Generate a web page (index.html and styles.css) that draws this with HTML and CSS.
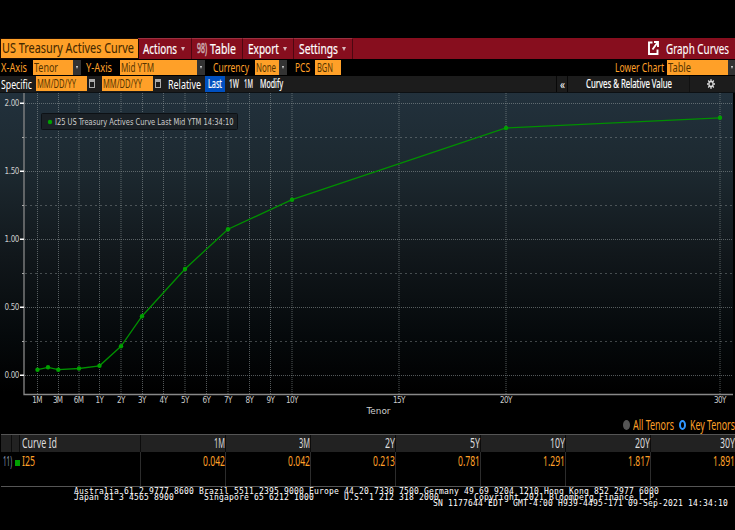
FILE: index.html
```html
<!DOCTYPE html>
<html lang="en">

<head>
	<meta charset="UTF-8" />
	<title>US Treasury Actives Curve</title>
	<link rel="stylesheet" href="styles.css">
	<script src="app.js" defer></script>
</head>

<body>
	<header class="title-bar">
		<h1 class="page-title"><span data-fit="132">US Treasury Actives Curve</span></h1>
		<nav class="menu">
			<div class="menu-item actions"><span data-fit="34">Actions</span><i class="caret"></i></div>
			<div class="menu-item table-item"><span class="key" data-fit="10">98)</span><span data-fit="26">Table</span></div>
			<div class="menu-item export"><span data-fit="31">Export</span><i class="caret"></i></div>
			<div class="menu-item settings"><span data-fit="39">Settings</span><i class="caret"></i></div>
		</nav>
		<div class="screen-name">
			<svg width="11" height="14" viewBox="0 0 11 14">
				<path d="M4.500 1.500H1v11.500h8.500V8.500M6 1h4v5M9.500 1.500L4.500 8.500" fill="none" stroke="#fff" stroke-width="1.900" />
			</svg>
			<span data-fit="63">Graph Curves</span>
		</div>
	</header>

	<div class="options">
		<label class="x-label"><span data-fit="26">X-Axis</span></label>
		<div class="field tenor"><span data-fit="24">Tenor</span></div><i class="drop"></i>
		<label class="y-label"><span data-fit="26">Y-Axis</span></label>
		<div class="field ytm"><span data-fit="33">Mid YTM</span></div><i class="drop"></i>
		<label class="cur-label"><span data-fit="36">Currency</span></label>
		<div class="field cur"><span data-fit="20">None</span></div><i class="drop"></i>
		<label class="pcs-label"><span data-fit="15">PCS</span></label>
		<div class="field bgn"><span data-fit="16">BGN</span></div>
		<label class="lower-label"><span data-fit="49">Lower Chart</span></label>
		<div class="field lower"><span data-fit="23">Table</span></div><i class="drop"></i>
	</div>

	<div class="toolbar">
		<span class="specific" data-fit="31">Specific</span>
		<div class="field date"><span data-fit="39">MM/DD/YY</span></div><i class="calendar"></i>
		<div class="field date"><span data-fit="39">MM/DD/YY</span></div><i class="calendar"></i>
		<span class="relative" data-fit="33">Relative</span>
		<div class="range active"><span data-fit="14">Last</span></div>
		<div class="range week"><span data-fit="10">1W</span></div>
		<div class="range month"><span data-fit="9">1M</span></div>
		<div class="range modify"><span data-fit="23">Modify</span></div>
		<div class="collapse"><span data-fit="5">«</span></div>
		<div class="panel-name"><span data-fit="86">Curves &amp; Relative Value</span></div>
		<div class="gear">
			<svg width="8" height="10" viewBox="-5 -5 10 10" preserveAspectRatio="none">
				<circle r="2.600" fill="none" stroke="#ddd" stroke-width="1.600" />
				<path d="M0-5v2M0 3v2M-5 0h2M3 0h2M-3.600-3.600l1.400 1.400M2.200 2.200l1.400 1.400M-3.600 3.600l1.400-1.400M2.200-2.200l1.400-1.400" stroke="#ddd" stroke-width="1.400" />
			</svg>
		</div>
	</div>

	<svg class="chart" width="735" height="325" viewBox="0 93 735 325">
		<defs>
			<linearGradient id="sky" x1="0" y1="0" x2="0" y2="1">
				<stop offset="0" stop-color="#22313c" />
				<stop offset=".25" stop-color="#1c282f" />
				<stop offset=".5" stop-color="#11171b" />
				<stop offset=".75" stop-color="#05090b" />
				<stop offset=".92" stop-color="#000" />
			</linearGradient>
		</defs>
		<rect x="0" y="93" width="733" height="325" fill="url(#sky)" />
		<path class="grid" d="M25 103.500H733M25 171.500H733M25 239.500H733M25 307.500H733M25 375.500H733" />
		<path class="grid minor" d="M25 137.500H733M25 205.500H733M25 273.500H733M25 341.500H733" />
		<path class="grid" d="M37.500 93V394M58.500 93V394M79 93V394M99.500 93V394M121 93V394M142.500 93V394M163.500 93V394M185 93V394M206.500 93V394M228 93V394M249.500 93V394M270.500 93V394M292 93V394M399 93V394M506 93V394M720 93V394" />
		<path class="axis" d="M24 93V394.500H733" />
		<path class="tick" d="M20 103.300h4M20 171.300h4M20 239.300h4M20 307.300h4M20 375.300h4" />
		<path class="tick small" d="M22 137.500h2M22 205.500h2M22 273.500h2M22 341.500h2" />
		<g class="y-text">
			<text x="19" y="106">2.00</text>
			<text x="19" y="174">1.50</text>
			<text x="19" y="242">1.00</text>
			<text x="19" y="310">0.50</text>
			<text x="19" y="378">0.00</text>
		</g>
		<g class="x-text">
			<text x="37" y="403">1M</text>
			<text x="57.700" y="403">3M</text>
			<text x="78.500" y="403">6M</text>
			<text x="99.500" y="403">1Y</text>
			<text x="121" y="403">2Y</text>
			<text x="142" y="403">3Y</text>
			<text x="163.500" y="403">4Y</text>
			<text x="185" y="403">5Y</text>
			<text x="206.500" y="403">6Y</text>
			<text x="228" y="403">7Y</text>
			<text x="249.300" y="403">8Y</text>
			<text x="270.500" y="403">9Y</text>
			<text x="292" y="403">10Y</text>
			<text x="399" y="403">15Y</text>
			<text x="506" y="403">20Y</text>
			<text x="720" y="403">30Y</text>
		</g>
		<text class="x-title" x="366.500" y="413.500" textLength="24" lengthAdjust="spacingAndGlyphs">Tenor</text>
		<polyline class="curve" points="37.500,369.700 48,367.300 58.300,369.700 79,368.500 99.500,365.800 121,346.300 142,316.200 185,269 228,229.200 292,199.700 506,128 720,117.800" />
		<g fill="#00a000">
			<circle cx="37.500" cy="369.700" r="2.200" />
			<circle cx="48" cy="367.300" r="2.200" />
			<circle cx="58.300" cy="369.700" r="2.200" />
			<circle cx="79" cy="368.500" r="2.200" />
			<circle cx="99.500" cy="365.800" r="2.200" />
			<circle cx="121" cy="346.300" r="2.200" />
			<circle cx="142" cy="316.200" r="2.200" />
			<circle cx="185" cy="269" r="2.200" />
			<circle cx="228" cy="229.200" r="2.200" />
			<circle cx="292" cy="199.700" r="2.200" />
			<circle cx="506" cy="128" r="2.200" />
			<circle cx="720" cy="117.800" r="2.200" />
		</g>
		<rect x="41.500" y="113.500" width="196" height="16" rx="1" fill="#1b2126" stroke="#0d1115" />
		<circle cx="50" cy="122" r="2.200" fill="#00a000" />
		<text class="legend" x="55" y="124.700" textLength="178.500" lengthAdjust="spacingAndGlyphs">I25 US Treasury Actives Curve Last Mid YTM 14:34:10</text>
	</svg>

	<div class="tenors">
		<i class="radio"></i><span data-fit="41">All Tenors</span>
		<i class="radio on"></i><span data-fit="45">Key Tenors</span>
	</div>

	<div class="curve-table">
		<div class="row head">
			<div class="num"></div>
			<div class="mark"></div>
			<div class="name"><span data-fit="35">Curve Id</span></div>
			<div><span data-fit="11">1M</span></div>
			<div><span data-fit="11">3M</span></div>
			<div><span data-fit="10">2Y</span></div>
			<div><span data-fit="10">5Y</span></div>
			<div><span data-fit="15">10Y</span></div>
			<div><span data-fit="15">20Y</span></div>
			<div><span data-fit="15">30Y</span></div>
		</div>
		<div class="row data">
			<div class="num"><span data-fit="9">11)</span></div>
			<div class="mark"><i></i></div>
			<div class="name"><span data-fit="13">I25</span></div>
			<div><span data-fit="22">0.042</span></div>
			<div><span data-fit="22">0.042</span></div>
			<div><span data-fit="22">0.213</span></div>
			<div><span data-fit="22">0.781</span></div>
			<div><span data-fit="22">1.291</span></div>
			<div><span data-fit="22">1.817</span></div>
			<div><span data-fit="22">1.891</span></div>
		</div>
	</div>

	<footer class="footer">
		<div>Australia 61 2 9777 8600 Brazil 5511 2395 9000 Europe 44 20 7330 7500 Germany 49 69 9204 1210 Hong Kong 852 2977 6000</div>
		<div>Japan 81 3 4565 8900      Singapore 65 6212 1000      U.S. 1 212 318 2000       Copyright 2021 Bloomberg Finance L.P.</div>
		<div class="serial">SN 1177644 EDT  GMT-4:00 H939-4495-171 09-Sep-2021 14:34:10</div>
	</footer>
</body>

</html>
```
FILE: styles.css
```css
* {
	box-sizing: border-box;
}

body {
	width: 735px;
	height: 530px;
	margin: 0;
	padding-top: 38px;
	overflow: hidden;
	background: #000;
	color: #fff;
	font-family: "Noto Sans", "Open Sans", sans-serif;
}

[data-fit] {
	display: block;
	flex: none;
	white-space: nowrap;
	transform-origin: 0 50%;
}

.title-bar {
	display: flex;
	height: 21px;
	background: #870e1e;
	border-left: 1px solid #000;
	font-size: 15px;
	line-height: 20px;
}

.page-title {
	width: 137px;
	height: 19px;
	margin: 1px 0 0;
	padding-left: 1px;
	background: #ffa028;
	outline: 1px solid #1a0a00;
	color: #442800;
	font-size: 15px;
	font-weight: normal;
	line-height: 17px;
	-webkit-text-stroke: .1px #442800;
}

.menu {
	display: flex;
}

.menu-item {
	display: flex;
	align-items: center;
	padding: 0 0 3px 5px;
	border-right: 1px solid #4d0711;
	border-top: 1px solid #9c3040;
	font-size: 15px;
	-webkit-text-stroke: .2px #fff;
}

.actions {
	width: 54px;
}

.table-item {
	width: 51px;
}

.export {
	width: 51px;
}

.settings {
	width: 59px;
}

.menu-item .key {
	margin-right: 3px;
	color: #c9a5a9;
	font-size: 14px;
	-webkit-text-stroke: .7px #c9a5a9;
}

.caret {
	margin: 3px 0 0 4px;
	border: 2px solid transparent;
	border-top: 4px solid #d8b8bc;
	border-bottom: 0;
}

.screen-name {
	display: flex;
	align-items: center;
	gap: 7px;
	margin-left: auto;
	padding: 0 6px 2px 0;
	-webkit-text-stroke: .1px #fff;
}

.options {
	display: flex;
	align-items: center;
	height: 17px;
	padding-left: 1px;
	color: #ffa028;
	font-size: 13px;
	line-height: 16px;
}

.options label {
	padding-bottom: 1px;
}

.field {
	height: 15px;
	padding-left: 1px;
	background: #ffa028;
	color: #553400;
	line-height: 15px;
}

.drop {
	display: flex;
	align-items: center;
	justify-content: center;
	width: 8px;
	height: 15px;
	background: #333;
}

.drop::after {
	content: "";
	border: 1.5px solid transparent;
	border-top: 3px solid #ddd;
	border-bottom: 0;
}

.x-label {
	width: 32px;
}

.tenor {
	width: 40px;
}

.y-label {
	width: 39px;
	padding-left: 5px;
}

.ytm {
	width: 77px;
}

.cur-label {
	width: 50px;
	padding-left: 8px;
}

.cur {
	width: 24px;
}

.pcs-label {
	width: 28px;
	padding-left: 8px;
}

.options .bgn {
	width: 26px;
	padding-left: 2px;
}

.lower-label {
	margin-left: auto;
	padding-right: 3px;
}

.lower {
	width: 61px;
}

.options .drop:last-child {
	width: 7px;
}

.toolbar {
	display: flex;
	height: 17px;
	padding-left: 1px;
	background: #1c1c1c;
	border-bottom: 1px solid #0c1013;
	font-size: 13px;
	line-height: 16px;
}

.specific {
	margin-right: 4px;
}

.date {
	width: 51px;
	font-size: 12.5px;
}

.calendar {
	width: 6px;
	height: 9px;
	margin: 3px 7px 0 2px;
	border: 1px solid #aaa;
	border-top-width: 3px;
}

.range {
	height: 16px;
	padding-left: 3px;
	font-size: 12px;
	-webkit-text-stroke: .2px #fff;
}

.relative {
	margin-right: 4px;
}

.active {
	width: 20px;
	background: #0050c0;
}

.week {
	width: 16px;
	padding-left: 4px;
}

.month {
	width: 16px;
}

.collapse {
	width: 12px;
	margin-left: auto;
	padding-left: 3px;
	border-left: 1px solid #080808;
	border-right: 1px solid #080808;
}

.panel-name {
	width: 122px;
	padding-left: 18px;
	border-right: 1px solid #111;
	font-size: 12px;
	-webkit-text-stroke: .2px #fff;
}

.gear {
	display: flex;
	align-items: center;
	width: 45px;
	padding-left: 17px;
}

.chart {
	display: block;
	fill: #ccc;
	font-family: "DejaVu Sans Condensed", "DejaVu Sans", sans-serif;
	font-size: 8px;
}

.grid {
	fill: none;
	stroke: #8b9295;
	stroke-opacity: .6;
	stroke-dasharray: 1 1;
}

.minor {
	stroke-dasharray: 2 3;
	stroke-opacity: .45;
}

.axis {
	fill: none;
	stroke: #888;
	stroke-width: 1.3;
}

.tick {
	stroke: #fff;
	stroke-width: 1.6;
}

.small {
	stroke: #aaa;
	stroke-width: 1;
}

.y-text {
	text-anchor: end;
	letter-spacing: -.4px;
}

.x-text {
	text-anchor: middle;
	letter-spacing: -.6px;
}

.x-title {
	font-size: 9px;
}

.legend {
	font-size: 8px;
}

.curve {
	fill: none;
	stroke: #009000;
	stroke-width: 1.3;
}

.tenors {
	display: flex;
	align-items: center;
	justify-content: flex-end;
	height: 16px;
	padding-bottom: 2px;
	color: #ffa028;
	font-size: 14px;
	line-height: 14px;
}

.radio {
	width: 7px;
	height: 10px;
	margin-right: 3px;
	border-radius: 50%;
	background: #555;
}

.radio.on {
	margin-left: 5px;
	margin-right: 4px;
	border: 2px solid #2f96ff;
	background: #000;
}

.curve-table {
	height: 53px;
	margin-left: 1px;
	border-top: 1px solid #555;
	border-bottom: 1px solid #555;
	font-size: 14px;
}

.row {
	display: grid;
	grid-template-columns: 11px 8px 121px repeat(7, 85px);
}

.row > div {
	display: flex;
	justify-content: flex-end;
	border-right: 1px solid #2c2c2c;
}

.row > .name,
.row > .num {
	justify-content: flex-start;
	padding-left: 2px;
}

.head {
	height: 17px;
	background: #222;
	color: #ddd;
	line-height: 15px;
}

.head > div {
	border-right-color: #0c0c0c;
}

.data {
	height: 34px;
	color: #ffa028;
	font-size: 14.5px;
	line-height: 16px;
}

.data > .num,
.data > .mark {
	border-right: 0;
}

.num {
	color: #8a9ab0;
}

.mark i {
	width: 5px;
	height: 6px;
	margin: 8px 0 0;
	background: #00a000;
}

.footer {
	padding: 2px 0 0 74px;
	font-family: "DejaVu Sans Mono", monospace;
	font-size: 8px;
	letter-spacing: .184px;
	line-height: 6px;
}

.footer div {
	white-space: pre;
}

.serial {
	padding-right: 7px;
	text-align: right;
}
```
FILE: app.js
```js
// squeeze each label to its terminal column width
document.querySelectorAll("[data-fit]").forEach(function (el) {
	var target = Number(el.dataset.fit);
	var range = document.createRange();
	range.selectNodeContents(el);
	var natural = range.getBoundingClientRect().width;
	el.style.width = target + "px";
	el.style.transform = "scaleX(" + target / natural + ")";
});
```
